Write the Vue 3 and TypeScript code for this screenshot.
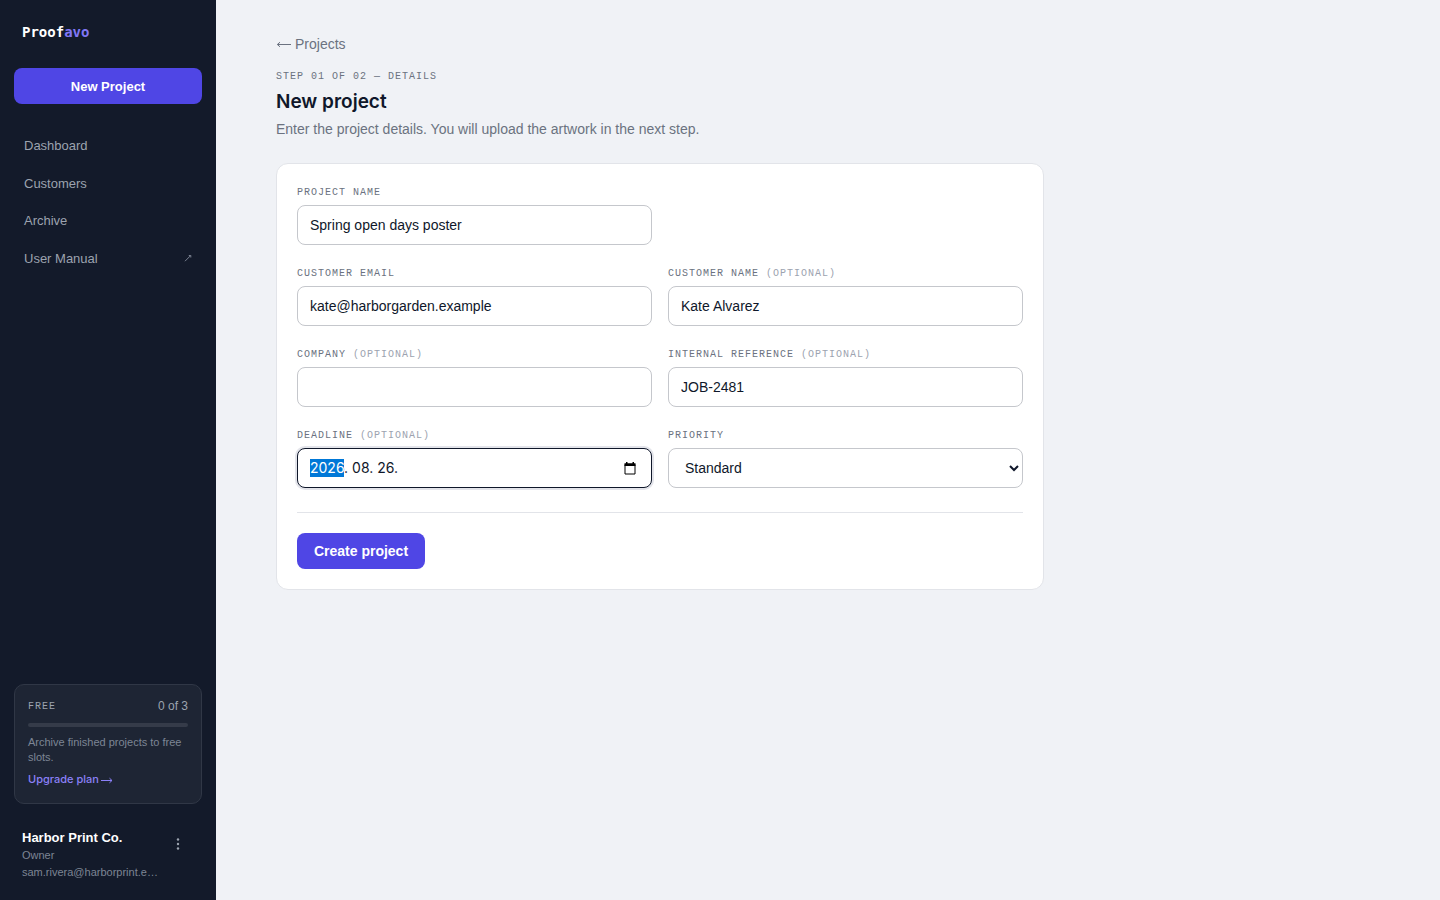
<script setup lang="ts">
import { onMounted, ref } from 'vue'

interface NavItem {
  label: string
  external?: boolean
}

const navItems: NavItem[] = [
  { label: 'Dashboard' },
  { label: 'Customers' },
  { label: 'Archive' },
  { label: 'User Manual', external: true },
]

const projectName = ref('Spring open days poster')
const email = ref('kate@harborgarden.example')
const customer = ref('Kate Alvarez')
const company = ref('')
const reference = ref('JOB-2481')
const deadline = ref('2026. 08. 26.')
const priority = ref('Standard')

const deadlineInput = ref<HTMLInputElement | null>(null)

// The year segment starts out selected, ready for typing.
function selectYear() {
  const el = deadlineInput.value
  if (!el) return
  el.focus()
  el.setSelectionRange(0, 4)
}

onMounted(selectYear)
</script>

<template>
  <div class="shell">
    <aside class="sidebar">
      <a href="#" class="brand">Proof<span class="brand-accent">avo</span></a>
      <button type="button" class="btn new-project">New Project</button>
      <nav class="nav" aria-label="Main">
        <a v-for="item in navItems" :key="item.label" href="#" class="nav-link">
          <span>{{ item.label }}</span>
          <svg v-if="item.external" class="external" width="8" height="8" viewBox="0 0 8 8" aria-hidden="true">
            <path d="M1 7.200 6.500 1.700M4.800 1.500h2v2" />
          </svg>
        </a>
      </nav>

      <section class="plan">
        <div class="plan-head">
          <span class="plan-name">FREE</span>
          <span class="plan-count">0 of 3</span>
        </div>
        <div class="meter"></div>
        <p class="plan-text">Archive finished projects to free slots.</p>
        <a href="#" class="upgrade">
          Upgrade plan
          <svg width="12" height="8" viewBox="0 0 12 8" aria-hidden="true">
            <path d="M0 4.500h11M8.500 2.200 11 4.500 8.500 6.800" />
          </svg>
        </a>
      </section>

      <footer class="account">
        <div class="account-info">
          <strong class="account-name">Harbor Print Co.</strong>
          <span class="account-line">Owner</span>
          <span class="account-line">sam.rivera@harborprint.e…</span>
        </div>
        <button type="button" class="kebab" aria-label="Account menu">
          <svg width="4" height="14" viewBox="0 0 4 14" aria-hidden="true">
            <circle cx="2" cy="2.500" r="1.200" />
            <circle cx="2" cy="7" r="1.200" />
            <circle cx="2" cy="11.500" r="1.200" />
          </svg>
        </button>
      </footer>
    </aside>

    <main class="main">
      <a href="#" class="back">
        <svg width="15" height="8" viewBox="0 0 15 8" aria-hidden="true">
          <path d="M15 4.500H1.500M4 2.200 1.300 4.500 4 6.800" />
        </svg>
        Projects
      </a>
      <p class="step">STEP 01 OF 02 — DETAILS</p>
      <h1 class="title">New project</h1>
      <p class="subtitle">Enter the project details. You will upload the artwork in the next step.</p>

      <form class="card" @submit.prevent>
        <div class="fields">
          <div class="field first">
            <label for="project-name">PROJECT NAME</label>
            <input id="project-name" v-model="projectName" class="control" type="text" />
          </div>
          <div class="field">
            <label for="email">CUSTOMER EMAIL</label>
            <input id="email" v-model="email" class="control" type="email" />
          </div>
          <div class="field">
            <label for="customer">CUSTOMER NAME <span class="optional">(OPTIONAL)</span></label>
            <input id="customer" v-model="customer" class="control" type="text" />
          </div>
          <div class="field">
            <label for="company">COMPANY <span class="optional">(OPTIONAL)</span></label>
            <input id="company" v-model="company" class="control" type="text" />
          </div>
          <div class="field">
            <label for="reference">INTERNAL REFERENCE <span class="optional">(OPTIONAL)</span></label>
            <input id="reference" v-model="reference" class="control" type="text" />
          </div>
          <div class="field">
            <label for="deadline">DEADLINE <span class="optional">(OPTIONAL)</span></label>
            <div class="control date">
              <input id="deadline" ref="deadlineInput" v-model="deadline" class="date-input" type="text" />
              <button type="button" class="date-button" aria-label="Open calendar">
                <svg width="12" height="13" viewBox="0 0 12 13" aria-hidden="true">
                  <path class="cal-frame" d="M1 2.500h10v9.500H1z" />
                  <path class="cal-head" d="M.5 1.200h11V4H.5zM2 0h1.500v2H2zM8.500 0H10v2H8.500z" />
                </svg>
              </button>
            </div>
          </div>
          <div class="field">
            <label for="priority">PRIORITY</label>
            <select id="priority" v-model="priority" class="control">
              <option>Standard</option>
              <option>High</option>
            </select>
          </div>
        </div>
        <div class="actions">
          <button type="submit" class="btn create">Create project</button>
        </div>
      </form>
    </main>
  </div>
</template>

<style>
body {
  margin: 0;
  background: #f0f2f6;
}
</style>

<style scoped>
.shell {
  display: flex;
  min-height: 100vh;
  font-family: "Liberation Sans", Arial, sans-serif;
  font-size: 14px;
  line-height: 20px;
  color: #0f172a;
  background: #f0f2f6;
}

.shell * {
  box-sizing: border-box;
}

a {
  text-decoration: none;
}

p,
h1 {
  margin: 0;
}

svg path {
  fill: none;
  stroke: currentColor;
}

button {
  font-family: inherit;
  cursor: pointer;
}

.sidebar {
  flex: none;
  display: flex;
  flex-direction: column;
  box-sizing: border-box;
  width: 216px;
  padding: 22px 14px 19px;
  background: #131a2a;
}

.brand {
  padding: 0 8px;
  margin-bottom: 26px;
  font-family: "DejaVu Sans Mono", monospace;
  font-size: 14px;
  font-weight: 700;
  color: #ffffff;
}

.brand-accent {
  color: #8177f5;
}

.btn {
  height: 36px;
  border: 0;
  border-radius: 8px;
  background: #4f46e5;
  color: #ffffff;
  font-weight: 700;
}

.new-project {
  flex: none;
  font-size: 13px;
}

.nav {
  display: flex;
  flex-direction: column;
  gap: 2px;
  margin-top: 24px;
}

.nav-link {
  display: flex;
  align-items: center;
  justify-content: space-between;
  padding: 8px 10px;
  font-size: 13px;
  line-height: 1.5;
  color: #9ca3af;
}

.external {
  color: #7b8291;
}

.plan {
  display: flex;
  flex-direction: column;
  margin-top: auto;
  padding: 13px 13px 15px;
  border: 1px solid #303746;
  border-radius: 10px;
  background: #1e2534;
  font-size: 11px;
  line-height: 15px;
}

.plan-head {
  display: flex;
  align-items: center;
  justify-content: space-between;
  height: 17px;
}

.plan-name {
  font-family: "Liberation Mono", monospace;
  font-size: 10px;
  letter-spacing: 1px;
  color: #9ca3af;
}

.plan-count {
  font-size: 12px;
  color: #9ca3af;
}

.meter {
  height: 4px;
  margin: 8px 0;
  border-radius: 2px;
  background: #353b49;
}

.plan-text {
  color: #7d8594;
}

.upgrade {
  display: flex;
  align-items: center;
  gap: 2px;
  margin-top: 6px;
  font-family: Inter, sans-serif;
  font-weight: 500;
  line-height: 17px;
  color: #8b80f8;
}

.account {
  display: flex;
  align-items: flex-start;
  justify-content: space-between;
  margin-top: 25px;
  padding: 0 10px 0 8px;
}

.account-info {
  display: flex;
  flex-direction: column;
  min-width: 0;
  line-height: 17px;
}

.account-name {
  font-size: 13px;
  line-height: 18px;
  color: #ffffff;
}

.account-line {
  white-space: nowrap;
  font-size: 11px;
  color: #7d8594;
}

.kebab {
  flex: none;
  display: flex;
  align-items: center;
  justify-content: center;
  width: 28px;
  height: 30px;
  padding: 0;
  border: 0;
  background: transparent;
  color: #9ca3af;
}

.kebab circle {
  fill: currentColor;
}

.main {
  flex: 1;
  box-sizing: border-box;
  min-width: 0;
  padding: 34px 60px;
}

.back {
  display: flex;
  align-items: center;
  gap: 4px;
  width: max-content;
  color: #6b7280;
}

.step {
  margin-top: 14px;
  font-family: "Liberation Mono", monospace;
  font-size: 10px;
  line-height: 17px;
  letter-spacing: 1px;
  color: #6b7280;
}

.title {
  margin-top: 3px;
  font-family: Inter, sans-serif;
  font-size: 19px;
  font-weight: 600;
  line-height: 28px;
}

.subtitle {
  margin-top: 3px;
  color: #6b7280;
}

.card {
  max-width: 768px;
  margin-top: 24px;
  padding: 20px;
  border: 1px solid #e2e4e9;
  border-radius: 12px;
  background: #ffffff;
}

.fields {
  display: grid;
  grid-template-columns: 1fr 1fr;
  gap: 20px 16px;
}

.field {
  display: flex;
  flex-direction: column;
  gap: 4px;
  min-width: 0;
}

.first,
.first + .field {
  grid-column: 1 / 2;
}

label {
  font-family: "Liberation Mono", monospace;
  font-size: 10px;
  line-height: 17px;
  letter-spacing: 1px;
  color: #6b7280;
}

.optional {
  color: #9ca3af;
}

.control {
  width: 100%;
  height: 40px;
  padding: 0 12px;
  border: 1px solid #c5c7cc;
  border-radius: 8px;
  background: #ffffff;
  font-family: inherit;
  font-size: 14px;
  color: #0f172a;
}

.date {
  display: flex;
  align-items: center;
}

.date:focus-within {
  border-color: #0f172a;
  box-shadow: 0 0 0 2px #e3e4ea;
}

.date-input {
  flex: 1;
  min-width: 0;
  height: 18px;
  padding: 0;
  border: 0;
  outline: 0;
  background: transparent;
  font-family: Inter, sans-serif;
  font-size: 14px;
  line-height: 18px;
  color: #0f172a;
}

.date-input::selection {
  background: #0078d7;
  color: #ffffff;
}

.date-button {
  display: flex;
  align-items: center;
  justify-content: center;
  width: 18px;
  height: 20px;
  padding: 0;
  border: 0;
  background: transparent;
  color: #000000;
}

.date-button .cal-head {
  fill: currentColor;
  stroke: none;
}

.actions {
  margin-top: 24px;
  padding-top: 20px;
  border-top: 1px solid #e2e4e9;
}

.create {
  display: block;
  min-width: 128px;
  padding: 0 16px;
  font-size: 14px;
}
</style>
